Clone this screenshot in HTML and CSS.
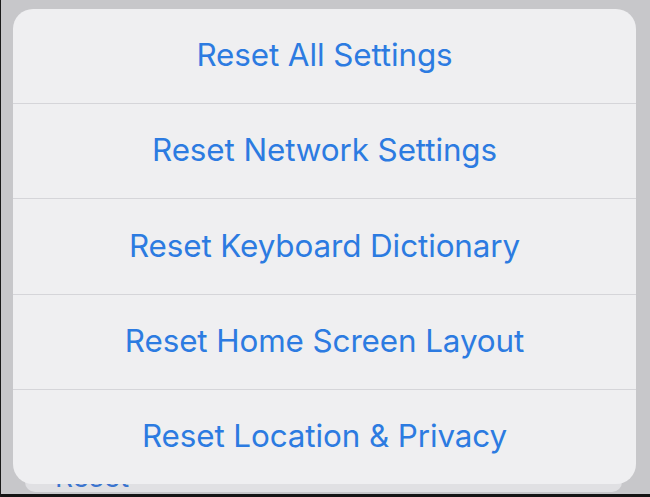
FILE: index.html
```html
<!DOCTYPE html>
<html lang="en">
<head>
<meta charset="utf-8">
<title>Reset</title>
<link rel="stylesheet" href="styles.css">
</head>
<body>
<div class="screen">
  <div class="backdrop">
    <div class="group">
      <div class="group-row">Reset</div>
    </div>
  </div>
  <div class="home-edge"></div>
  <div class="sheet">
    <div class="action">Reset All Settings</div>
    <div class="action">Reset Network Settings</div>
    <div class="action">Reset Keyboard Dictionary</div>
    <div class="action">Reset Home Screen Layout</div>
    <div class="action">Reset Location &amp; Privacy</div>
  </div>
</div>
</body>
</html>
```
FILE: styles.css
```css
html, body {
  margin: 0;
  padding: 0;
}
body {
  width: 650px;
  height: 497px;
  overflow: hidden;
  background: #c7c7ca;
  font-family: Inter, "Liberation Sans", sans-serif;
}
.screen {
  position: relative;
  width: 650px;
  height: 497px;
  display: flex;
  flex-direction: column;
  border-left: 1px solid #1a1a1a;
  box-sizing: border-box;
}
.backdrop {
  flex: 1;
  display: flex;
  flex-direction: column;
  justify-content: flex-end;
  padding: 0 28px 2px 24px;
}
.group {
  background: #e0e0e3;
  border-radius: 0 0 10px 10px;
  height: 90px;
  display: flex;
  align-items: flex-end;
}
.group-row {
  padding: 0 0 2px 30px;
  color: #3a74cf;
  font-size: 28px;
  line-height: 34px;
  height: 30px;
  overflow: hidden;
}
.home-edge {
  height: 3px;
  background: #141414;
}
.sheet {
  position: absolute;
  top: 9px;
  left: 12px;
  width: 623px;
  height: 475px;
  background: #efeff1;
  border-radius: 20px;
  display: flex;
  flex-direction: column;
  overflow: hidden;
}
.action {
  flex: 1;
  display: flex;
  align-items: center;
  justify-content: center;
  color: #2c7be1;
  font-size: 31.4px;
  letter-spacing: -0.1px;
  padding-bottom: 2px;
}
.action + .action {
  border-top: 1px solid #d5d5d9;
}
```
